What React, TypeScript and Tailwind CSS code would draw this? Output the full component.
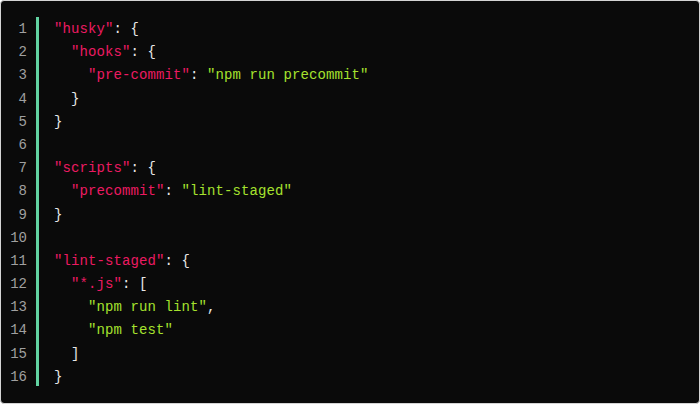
import React from 'react';

type Tok = { t: string; c?: 'k' | 's' | 'p' };

const K = (t: string): Tok => ({ t, c: 'k' });
const S = (t: string): Tok => ({ t, c: 's' });
const P = (t: string): Tok => ({ t, c: 'p' });

// each line: indent + tokens
const lines: Tok[][] = [
    [K('"husky"'), P(': {')],
    [P('  '), K('"hooks"'), P(': {')],
    [P('    '), K('"pre-commit"'), P(': '), S('"npm run precommit"')],
    [P('  }')],
    [P('}')],
    [],
    [K('"scripts"'), P(': {')],
    [P('  '), K('"precommit"'), P(': '), S('"lint-staged"')],
    [P('}')],
    [],
    [K('"lint-staged"'), P(': {')],
    [P('  '), K('"*.js"'), P(': [')],
    [P('    '), S('"npm run lint"'), P(',')],
    [P('    '), S('"npm test"')],
    [P('  ]')],
    [P('}')],
];

const colorOf = (c?: string) => {
    if (c === 'k') return 'text-[#ec1a62]';
    if (c === 's') return 'text-[#a6e22e]';
    return 'text-[#e8e8e8]';
};

const App: React.FC = () => {
    return (
        <div className="w-[700px] h-[404px] bg-white">
            <div
                className="w-[700px] h-[404px] bg-[#0a0a0a] border border-[#d4d4d4] rounded-[4px] pt-[16px] flex text-[14px] leading-[23.2px]"
                style={{ fontFamily: '"Liberation Mono", "DejaVu Sans Mono", monospace' }}
            >
                <div className="w-[26px] pt-[1px] text-right text-[#a0a0a0]">
                    {lines.map((_, i) => (
                        <div key={i} className="h-[23.2px]">
                            {i + 1}
                        </div>
                    ))}
                </div>
                <div className="ml-[9px] w-[3px] h-[369px] bg-[#62d3a2]"></div>
                <div className="pl-[15px] pt-[1px] whitespace-pre tracking-[0.1px]">
                    {lines.map((toks, i) => (
                        <div key={i} className="h-[23.2px]">
                            {toks.map((tok, j) => (
                                <span key={j} className={colorOf(tok.c)}>
                                    {tok.t}
                                </span>
                            ))}
                        </div>
                    ))}
                </div>
            </div>
        </div>
    );
};

export default App;
